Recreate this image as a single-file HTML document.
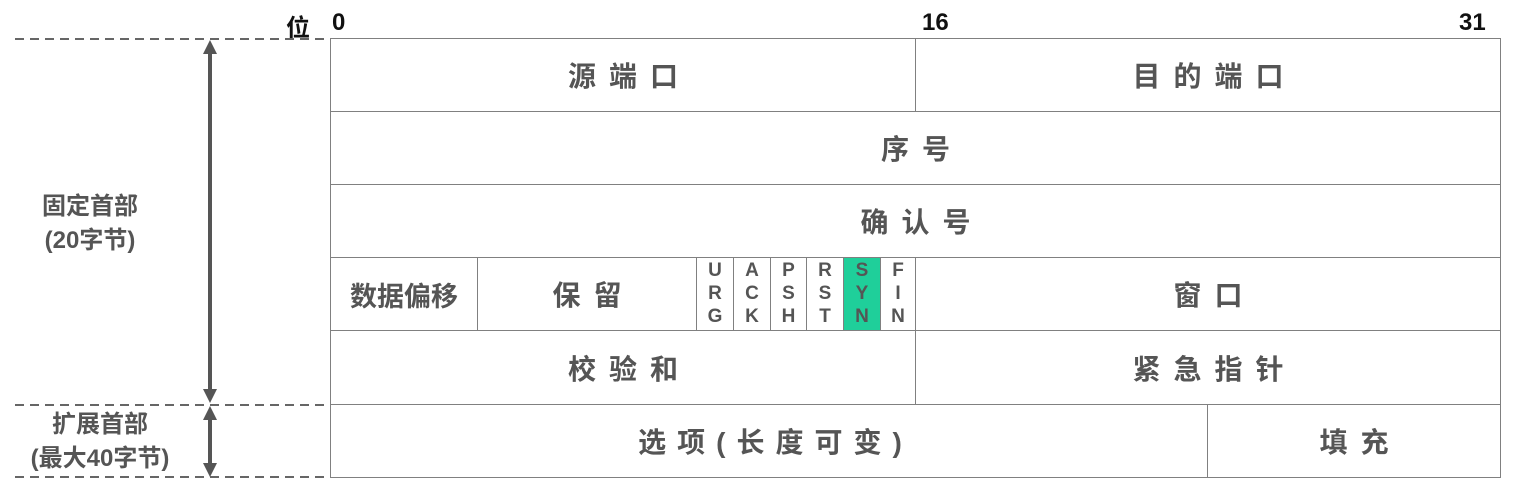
<!DOCTYPE html>
<html><head><meta charset="utf-8"><style>
body{margin:0;width:1527px;height:488px;background:#fff;position:relative;overflow:hidden;font-family:"Liberation Sans","Noto Sans CJK SC",sans-serif;font-weight:bold;color:#555}
.c{position:absolute;border:1px solid #808080;box-sizing:border-box;display:flex;align-items:center;justify-content:center;font-size:28px;letter-spacing:13px}
.c span{margin-right:-13px}
.f{position:absolute;border:1px solid #808080;box-sizing:border-box;font-size:19px;line-height:23px;text-align:center;font-weight:bold;color:#555;padding-top:1px}
.t{position:absolute;font-size:24px;color:#111}
.l{position:absolute;font-size:24px;text-align:center;line-height:34px}
</style></head><body>
<div class="t" style="left:286px;top:8px">位</div>
<div class="t" style="left:332px;top:9px">0</div>
<div class="t" style="left:922px;top:9px">16</div>
<div class="t" style="left:1459px;top:9px">31</div>
<svg style="position:absolute;left:0;top:0" width="1527" height="488">
<g stroke="#666" stroke-width="2" stroke-dasharray="9,6">
<line x1="15" y1="39" x2="330" y2="39"/><line x1="15" y1="405" x2="330" y2="405"/><line x1="15" y1="477" x2="330" y2="477"/></g>
<g stroke="#555" stroke-width="4" fill="#555">
<line x1="210" y1="50" x2="210" y2="392"/><polygon points="210,40 203,54 217,54" stroke="none"/><polygon points="210,403 203,389 217,389" stroke="none"/>
<line x1="210" y1="416" x2="210" y2="466"/><polygon points="210,406 203,420 217,420" stroke="none"/><polygon points="210,477 203,463 217,463" stroke="none"/></g>
</svg>
<div class="l" style="left:10px;top:190px;width:160px">固定首部<br>(20字节)</div>
<div class="l" style="left:5px;top:408px;width:190px">扩展首部<br>(最大40字节)</div>
<div class="c" style="left:330px;top:38px;width:586px;height:74px"><span>源端口</span></div>
<div class="c" style="left:915px;top:38px;width:586px;height:74px"><span>目的端口</span></div>
<div class="c" style="left:330px;top:111px;width:1171px;height:74px"><span>序号</span></div>
<div class="c" style="left:330px;top:184px;width:1171px;height:74px"><span>确认号</span></div>
<div class="c" style="left:330px;top:257px;width:148px;height:74px;letter-spacing:0;font-size:27px">数据偏移</div>
<div class="c" style="left:477px;top:257px;width:220px;height:74px"><span>保留</span></div>
<div class="f" style="left:696px;top:257px;width:38px;height:74px">U<br>R<br>G</div>
<div class="f" style="left:733px;top:257px;width:38px;height:74px">A<br>C<br>K</div>
<div class="f" style="left:770px;top:257px;width:37px;height:74px">P<br>S<br>H</div>
<div class="f" style="left:806px;top:257px;width:38px;height:74px">R<br>S<br>T</div>
<div class="f" style="left:843px;top:257px;width:38px;height:74px;background:#1fcf9a">S<br>Y<br>N</div>
<div class="f" style="left:880px;top:257px;width:36px;height:74px">F<br>I<br>N</div>
<div class="c" style="left:915px;top:257px;width:586px;height:74px"><span>窗口</span></div>
<div class="c" style="left:330px;top:330px;width:586px;height:75px"><span>校验和</span></div>
<div class="c" style="left:915px;top:330px;width:586px;height:75px"><span>紧急指针</span></div>
<div class="c" style="left:330px;top:404px;width:878px;height:74px;letter-spacing:11px"><span>选项(长度可变)</span></div>
<div class="c" style="left:1207px;top:404px;width:294px;height:74px"><span>填充</span></div>
</body></html>
